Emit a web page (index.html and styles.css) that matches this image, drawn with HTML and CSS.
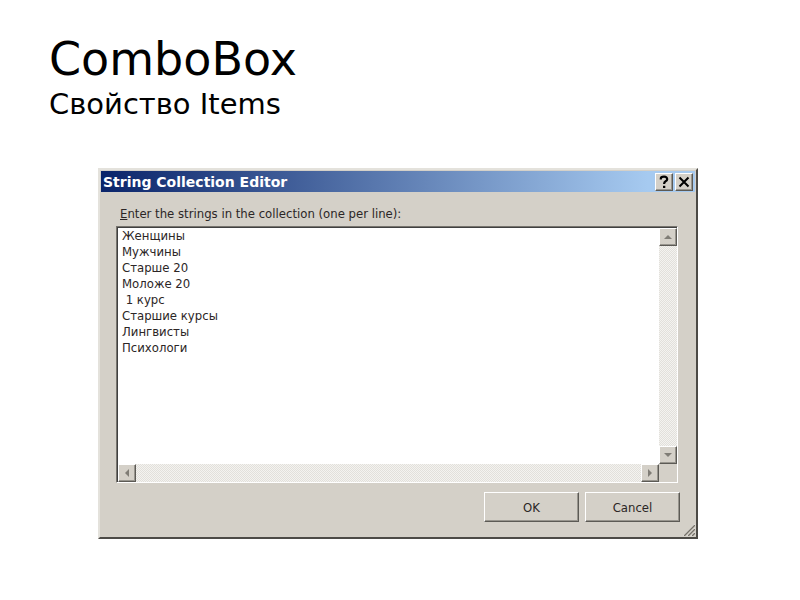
FILE: index.html
```html
<!DOCTYPE html>
<html lang="ru">
<head>
  <meta charset="UTF-8">
  <meta name="viewport" content="width=device-width, initial-scale=1.0">
  <title>ComboBox - Свойство Items</title>
  <link rel="stylesheet" href="styles.css">
</head>
<body>

<header class="slide-header">
  <h1>ComboBox</h1>
  <p class="subtitle">Свойство Items</p>
</header>

<form class="dialog" onsubmit="return false">
  <div class="title-bar">
    <h2>String Collection Editor</h2>
    <button type="button" class="title-btn" aria-label="Help">
      <svg width="14" height="14" viewBox="0 0 14 14"><path d="M3.8 4.6V3.8Q3.8 1.7 7 1.7T10.2 4.2Q10.2 5.5 8.6 6.3Q7.1 7.1 7.1 9" fill="none" stroke="#000" stroke-width="2.2"/><path d="M6 10.8h2.3v2.2H6z"/></svg>
    </button>
    <button type="button" class="title-btn" aria-label="Close">
      <svg width="14" height="14" viewBox="0 0 14 14"><path d="M2.5 2.5l9 9M11.5 2.5l-9 9" stroke="#000" stroke-width="2"/></svg>
    </button>
  </div>

  <div class="content">
    <label for="strings"><u>E</u>nter the strings in the collection (one per line):</label>
    <div class="editor">
      <textarea id="strings" wrap="off" spellcheck="false">Женщины
Мужчины
Старше 20
Моложе 20
 1 курс
Старшие курсы
Лингвисты
Психологи</textarea>
      <div class="scrollbar vertical">
        <button type="button" class="scroll-btn" aria-label="Scroll up"><svg width="8" height="4" viewBox="0 0 8 4"><path d="M0 4L4 0L8 4z"/></svg></button>
        <button type="button" class="scroll-btn" aria-label="Scroll down"><svg width="8" height="4" viewBox="0 0 8 4"><path d="M0 0L4 4L8 0z"/></svg></button>
      </div>
      <div class="scrollbar">
        <button type="button" class="scroll-btn" aria-label="Scroll left"><svg width="4" height="8" viewBox="0 0 4 8"><path d="M4 0L0 4L4 8z"/></svg></button>
        <button type="button" class="scroll-btn" aria-label="Scroll right"><svg width="4" height="8" viewBox="0 0 4 8"><path d="M0 0L4 4L0 8z"/></svg></button>
      </div>
    </div>
    <div class="actions">
      <button type="submit" class="btn">OK</button>
      <button type="button" class="btn">Cancel</button>
    </div>
  </div>

  <svg class="grip" width="13" height="13" viewBox="0 0 13 13"><path d="M1 13L13 1M5 13L13 5M9 13L13 9" stroke="#fff" stroke-width="1"/><path d="M2 13L13 2M6 13L13 6M10 13L13 10" stroke="#77736a" stroke-width="1.5"/></svg>
</form>

</body>
</html>
```
FILE: styles.css
```css
* {
  margin: 0;
  padding: 0;
  box-sizing: border-box;
}

body {
  background: #fff;
  color: #000;
  font-family: "DejaVu Sans", sans-serif;
}

.slide-header {
  padding: 32px 49px 0;
}

h1 {
  font-size: 46px;
  font-weight: normal;
  line-height: 54px;
}

.subtitle {
  font-size: 29px;
  line-height: 36px;
}

.dialog {
  position: relative;
  margin: 46px 102px 60px 98px;
  padding: 1px;
  background: #d4d0c8;
  border: 2px solid;
  border-color: #e4e2dc #4c4a46 #4c4a46 #e4e2dc;
  font-family: "DejaVu Sans Condensed", "DejaVu Sans", sans-serif;
  font-size: 13px;
  color: #2c2626;
}

.title-bar {
  display: flex;
  align-items: center;
  gap: 2px;
  height: 21px;
  padding: 0 2px;
  background: linear-gradient(to right, #0a246a, #a6caf0 92%);
}

.title-bar h2 {
  flex: 1;
  font-family: "DejaVu Sans", sans-serif;
  font-size: 14px;
  line-height: 20px;
  color: #fff;
}

button {
  display: flex;
  align-items: center;
  justify-content: center;
  background: #d4d0c8;
  border: 1px solid;
  border-color: #fff #5c5a55 #5c5a55 #fff;
  font: inherit;
  color: inherit;
}

.title-btn {
  width: 18px;
  height: 18px;
  box-shadow: inset -1px -1px #98958e;
}

.content {
  padding: 13px 15px 14px;
}

label {
  display: block;
  padding: 0 4px;
  line-height: 18px;
  margin-bottom: 3px;
}

.editor {
  display: grid;
  grid-template-columns: 1fr 18px;
  grid-template-rows: 236px 18px;
  margin-right: 2px;
  border: 1px solid;
  border-color: #77746e #fff #fff #77746e;
  box-shadow: inset 1px 1px #404040;
  padding: 1px 0 0 1px;
}

textarea {
  display: block;
  width: 100%;
  height: 100%;
  padding: 0 4px;
  border: none;
  outline: none;
  resize: none;
  overflow: hidden;
  background: #fff;
  font: inherit;
  line-height: 16px;
  color: inherit;
}

.scrollbar {
  display: flex;
  justify-content: space-between;
  background: repeating-conic-gradient(#f4f3f0 0 25%, #e2e0db 0 50%) 0 0 / 2px 2px;
}

.scrollbar.vertical {
  flex-direction: column;
}

.scroll-btn {
  width: 18px;
  height: 18px;
  box-shadow: inset -1px -1px #98958e;
}

.scroll-btn svg {
  fill: #807d76;
}

.actions {
  display: flex;
  justify-content: flex-end;
  gap: 6px;
  margin-top: 9px;
}

.btn {
  width: 95px;
  height: 30px;
  box-shadow: inset -1px -1px #98958e;
}

.grip {
  position: absolute;
  right: 1px;
  bottom: 1px;
}
```
